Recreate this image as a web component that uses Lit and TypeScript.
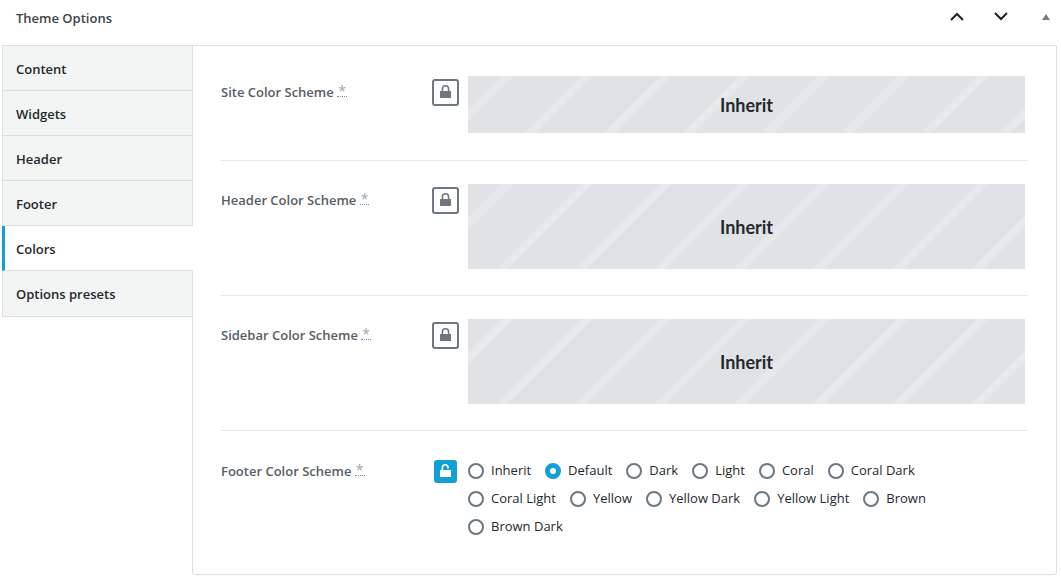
import { LitElement, html, css, svg } from "lit";
import { customElement, state } from "lit/decorators.js";

const TABS = ["Content", "Widgets", "Header", "Footer", "Colors", "Options presets"];

const SCHEMES = [
  "Inherit", "Default", "Dark", "Light", "Coral", "Coral Dark",
  "Coral Light", "Yellow", "Yellow Dark", "Yellow Light", "Brown", "Brown Dark",
];

const INHERITED = [
  { title: "Site Color Scheme", size: "short" },
  { title: "Header Color Scheme", size: "tall" },
  { title: "Sidebar Color Scheme", size: "tall" },
];

const lockClosed = svg`<path d="M0 6h1.6V3.9a3.9 3.9 0 0 1 7.8 0V6H11v7H0zM3.2 6h4.6V3.9a2.3 2.4 0 0 0-4.6 0z"/>`;
const lockOpen = svg`<path d="M0 6h1.6V3.7a3.6 3.7 0 0 1 7.2 0v.9H7.2v-.9a2 2.1 0 0 0-4 0V6H11v7H0z"/>`;

@customElement("app-root")
export class ThemeOptions extends LitElement {
  static styles = css`
    :host {
      display: block;
      font-family: "Open Sans", "Noto Sans", sans-serif;
      font-size: 13px;
      line-height: 20px;
      color: #23282d;
      background: #fff;
    }
    button {
      font: inherit;
      color: inherit;
      margin: 0;
      padding: 0;
      border: 0;
      background: none;
      cursor: pointer;
    }
    .box {
      padding: 0 4px 5px 2px;
    }
    .head {
      display: flex;
      align-items: center;
      height: 36px;
      padding: 0 3px 9px 14px;
    }
    .title {
      flex: 1;
      margin: 0;
      font-size: 13px;
      font-weight: 600;
      color: #3c434a;
    }
    .actions {
      display: flex;
      align-items: center;
    }
    .move,
    .toggle {
      display: grid;
      place-items: center;
      width: 44px;
      height: 36px;
      padding-bottom: 3px;
    }
    .move svg {
      fill: none;
      stroke: #1e2327;
      stroke-width: 2;
    }
    .toggle {
      width: 16px;
      margin-left: 15px;
    }
    .toggle svg {
      fill: #787c82;
    }
    .body {
      display: flex;
      align-items: stretch;
    }
    .tabs {
      display: flex;
      flex-direction: column;
      align-items: stretch;
      flex: 0 0 191px;
      margin-right: -1px;
      z-index: 1;
      align-self: flex-start;
      border-top: 1px solid #dcdee2;
    }
    .tab {
      height: 45px;
      padding: 2px 14px 0 13px;
      border: 1px solid #dcdee2;
      border-top: 0;
      background: #f3f5f5;
      font-weight: 600;
      text-align: left;
    }
    .tab:last-child {
      height: 46px;
      padding-bottom: 1px;
    }
    .tab.active {
      padding-left: 11px;
      border-left: 3px solid #11a0d2;
      border-right-color: #fff;
      background: #fff;
    }
    .panel {
      flex: 1;
      min-width: 0;
      padding: 7px 28px 8px;
      border: 1px solid #dcdee2;
      border-bottom-right-radius: 3px;
      border-bottom-left-radius: 3px;
    }
    .field {
      display: grid;
      grid-template-columns: 211px 36px minmax(0, 1fr);
      align-items: start;
      margin: 0;
      padding: 23px 3px 26px 0;
      border-bottom: 1px solid #e5e7eb;
    }
    .field:first-child {
      padding-bottom: 27px;
    }
    .field:last-child {
      padding-top: 24px;
      border-bottom: 0;
    }
    .name {
      margin: 0;
      padding-top: 6px;
      font-size: 13px;
      font-weight: 600;
      color: #555d66;
    }
    .hint {
      display: inline-block;
      padding: 0 1px;
      border-bottom: 1px dotted #82878c;
      font-size: 14px;
      font-weight: 400;
      line-height: 10px;
      color: #a0a5aa;
      text-decoration: none;
      vertical-align: 1px;
    }
    .lock {
      display: grid;
      place-items: center;
      width: 27px;
      height: 27px;
      margin-top: 3px;
      padding-bottom: 2px;
      border: 2px solid #6c7781;
      border-radius: 3px;
      fill: #6c7781;
    }
    .lock.open {
      width: 23px;
      height: 23px;
      margin: 5px 2px 0;
      border: 0;
      background: #11a0d2;
      fill: #fff;
    }
    .cover {
      display: grid;
      place-items: center;
      height: 57px;
      background: repeating-linear-gradient(
        135deg, #e1e2e6 0 24px, #e7e8ec 24px 32px, #e1e2e6 32px 56px
      );
      font-family: Lato, "Open Sans", sans-serif;
      font-size: 18px;
      font-weight: 700;
    }
    .cover.tall {
      height: 85px;
    }
    .choices {
      display: flex;
      flex-wrap: wrap;
      column-gap: 14px;
      padding: 1px 20px 0 0;
    }
    .choice {
      display: flex;
      align-items: center;
      gap: 7px;
      height: 28px;
    }
    .choice input {
      appearance: none;
      flex: none;
      width: 16px;
      height: 16px;
      margin: 2px 0 0;
      border: 2px solid #6c7781;
      border-radius: 50%;
      background: #fff;
    }
    .choice input:checked {
      border: 5px solid #11a0d2;
    }
  `;

  @state() private tab = "Colors";
  @state() private scheme = "Default";

  private name(title: string, id: string) {
    return html`<h3 class="name" id=${id}>${title} <abbr class="hint">*</abbr></h3>`;
  }

  render() {
    return html`
      <section class="box">
        <header class="head">
          <h2 class="title">Theme Options</h2>
          <div class="actions">
            <button class="move" aria-label="Move up">
              <svg width="14" height="9" viewBox="0 0 14 9"><path d="M1 8l6-6 6 6" /></svg>
            </button>
            <button class="move" aria-label="Move down">
              <svg width="14" height="9" viewBox="0 0 14 9"><path d="M1 1l6 6 6-6" /></svg>
            </button>
            <button class="toggle" aria-label="Toggle panel">
              <svg width="8" height="6" viewBox="0 0 8 6"><path d="M4 0l4 6H0z" /></svg>
            </button>
          </div>
        </header>
        <div class="body">
          <nav class="tabs">
            ${TABS.map(
              (t) => html`<button class="tab ${t === this.tab ? "active" : ""}" @click=${() => (this.tab = t)}>${t}</button>`
            )}
          </nav>
          <div class="panel">
            ${INHERITED.map(
              (f, i) => html`
                <div class="field">
                  ${this.name(f.title, `field-${i}`)}
                  <button class="lock" aria-label="Unlock">
                    <svg width="11" height="13" viewBox="0 0 11 13">${lockClosed}</svg>
                  </button>
                  <div class="cover ${f.size}">Inherit</div>
                </div>
              `
            )}
            <div class="field">
              ${this.name("Footer Color Scheme", "footer-scheme")}
              <button class="lock open" aria-label="Lock">
                <svg width="11" height="13" viewBox="0 0 11 13">${lockOpen}</svg>
              </button>
              <div class="choices" role="radiogroup" aria-labelledby="footer-scheme">
                ${SCHEMES.map(
                  (s) => html`
                    <label class="choice">
                      <input type="radio" name="scheme" .checked=${s === this.scheme} @change=${() => (this.scheme = s)} />
                      <span>${s}</span>
                    </label>
                  `
                )}
              </div>
            </div>
          </div>
        </div>
      </section>
    `;
  }
}
